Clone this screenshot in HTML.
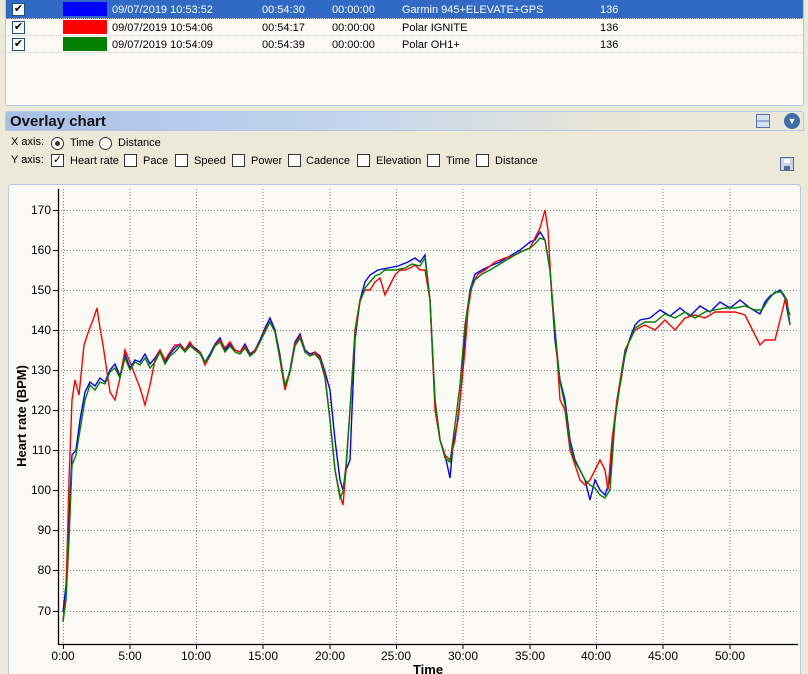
<!DOCTYPE html>
<html><head><meta charset="utf-8"><style>
*{margin:0;padding:0;box-sizing:border-box}
body{width:808px;height:674px;overflow:hidden;background:#ece9d8;font-family:"Liberation Sans",sans-serif;font-size:11px;color:#000;position:relative}
.abs{position:absolute}
.list{left:5px;top:0;width:799px;height:106px;background:#fbfaf5;border:1px solid #b7c8e3;border-top:none;border-radius:0 0 3px 3px}
.row{position:absolute;left:0;width:797px;height:17px;border-bottom:1px dotted #c8c8c8}
.row span{position:absolute;top:2px}
.cb{position:absolute;width:13px;height:13px;border:1px solid #1c5180;background:#fff;font-size:11px;line-height:11px;text-align:center}
.sw{position:absolute;left:57px;top:2px;width:44px;height:14px}
.hdr{left:5px;top:111px;width:799px;height:20px;border:1px solid #b7c8e3;border-radius:3px 3px 0 0;background:linear-gradient(90deg,#a8c0e8 0%,#c5d6ee 45%,#e8e6d8 75%,#ece9d8 100%)}
.hdr b{position:absolute;left:4px;top:1px;font-size:15px;color:#111}
.opt{position:absolute;font-size:11px}
.rb{position:absolute;width:13px;height:13px;border-radius:50%;border:1px solid #333;background:#fff}
.ck{position:absolute;width:13px;height:13px;border:1px solid #333;background:#fff;font-size:11px;line-height:11px;text-align:center}
</style></head><body>
<div class="abs list">
 <div class="row" style="top:0;background:#316ac5;color:#fff;height:19px">
  <div class="cb" style="left:6px;top:3px;color:#000">✔</div><div class="sw" style="background:#0000ff;top:2px"></div>
  <span style="left:106px;top:4px">09/07/2019 10:53:52</span><span style="left:256px;top:4px">00:54:30</span><span style="left:326px;top:4px">00:00:00</span><span style="left:396px;top:4px">Garmin 945+ELEVATE+GPS</span><span style="left:594px;top:4px">136</span>
 </div>
 <div class="row" style="top:19px">
  <div class="cb" style="left:6px;top:2px">✔</div><div class="sw" style="background:#ff0000;top:1px"></div>
  <span style="left:106px;top:3px">09/07/2019 10:54:06</span><span style="left:256px;top:3px">00:54:17</span><span style="left:326px;top:3px">00:00:00</span><span style="left:396px;top:3px">Polar IGNITE</span><span style="left:594px;top:3px">136</span>
 </div>
 <div class="row" style="top:36px">
  <div class="cb" style="left:6px;top:2px">✔</div><div class="sw" style="background:#008000;top:1px"></div>
  <span style="left:106px;top:3px">09/07/2019 10:54:09</span><span style="left:256px;top:3px">00:54:39</span><span style="left:326px;top:3px">00:00:00</span><span style="left:396px;top:3px">Polar OH1+</span><span style="left:594px;top:3px">136</span>
 </div>
</div>
<div class="abs hdr"><b>Overlay chart</b>
 <div class="abs" style="left:750px;top:2px;width:14px;height:14px;border:1px solid #5a6fc0;background:linear-gradient(#cfe4f8 0 45%,#5a6fc0 45% 55%,#cfe4f8 55%)"></div>
 <div class="abs" style="left:778px;top:1px;width:16px;height:16px;border-radius:50%;background:#3d6ea8;color:#fff;font-size:9px;text-align:center;line-height:16px">▼</div>
</div>
<div class="opt" style="left:11px;top:136px">X axis:</div>
<div class="rb" style="left:51px;top:137px"><div style="position:absolute;left:3px;top:3px;width:5px;height:5px;border-radius:50%;background:#333"></div></div>
<div class="opt" style="left:70px;top:137px">Time</div>
<div class="rb" style="left:99px;top:137px"></div>
<div class="opt" style="left:118px;top:137px">Distance</div>
<div class="opt" style="left:11px;top:154px">Y axis:</div>
<div class="ck" style="left:51px;top:154px">✓</div><div class="opt" style="left:70px;top:155px">Heart rate</div>
<div class="ck" style="left:124px;top:154px"></div><div class="opt" style="left:143px;top:155px">Pace</div>
<div class="ck" style="left:175px;top:154px"></div><div class="opt" style="left:194px;top:155px">Speed</div>
<div class="ck" style="left:232px;top:154px"></div><div class="opt" style="left:251px;top:155px">Power</div>
<div class="ck" style="left:288px;top:154px"></div><div class="opt" style="left:306px;top:155px">Cadence</div>
<div class="ck" style="left:357px;top:154px"></div><div class="opt" style="left:376px;top:155px">Elevation</div>
<div class="ck" style="left:427px;top:154px"></div><div class="opt" style="left:446px;top:155px">Time</div>
<div class="ck" style="left:476px;top:154px"></div><div class="opt" style="left:495px;top:155px">Distance</div>
<div class="abs" style="left:780px;top:157px;width:14px;height:14px;border:1px solid #5a6a90;background:#c8d4e8"><div style="position:absolute;left:3px;top:1px;width:6px;height:4px;background:#fff"></div><div style="position:absolute;left:3px;top:8px;width:6px;height:4px;background:#5a6a90"></div></div>
<svg class="abs" style="left:0;top:0" width="808" height="674">
<rect x="8.5" y="184.5" width="792" height="495" rx="3" fill="#fbfaf5" stroke="#b7c8e3"/>
<g stroke="#808080" stroke-dasharray="1,2" stroke-width="1">
<path d="M63.5 189V644M130 189V644M196.5 189V644M263 189V644M330 189V644M396.5 189V644M463 189V644M530 189V644M596.5 189V644M663 189V644M730 189V644"/>
<path d="M58 210.5H798M58 250.5H798M58 290.5H798M58 330.5H798M58 370.5H798M58 410.5H798M58 450.5H798M58 490.5H798M58 530.5H798M58 570.5H798M58 611.5H798"/>
</g>
<path d="M58.5 189V644.5H798" stroke="#000" fill="none" stroke-width="1.3"/>
<g stroke="#000"><path d="M53 210.5h5M53 250.5h5M53 290.5h5M53 330.5h5M53 370.5h5M53 410.5h5M53 450.5h5M53 490.5h5M53 530.5h5M53 570.5h5M53 611.5h5"/>
<path d="M63.5 644v5M130 644v5M196.5 644v5M263 644v5M330 644v5M396.5 644v5M463 644v5M530 644v5M596.5 644v5M663 644v5M730 644v5"/></g>
<g font-size="12" text-anchor="end" font-family="Liberation Sans">
<text x="51" y="214">170</text><text x="51" y="254">160</text><text x="51" y="294">150</text><text x="51" y="334">140</text><text x="51" y="374">130</text><text x="51" y="414">120</text><text x="51" y="454">110</text><text x="51" y="494">100</text><text x="51" y="534">90</text><text x="51" y="574">80</text><text x="51" y="615">70</text></g>
<g font-size="12" text-anchor="middle" font-family="Liberation Sans">
<text x="63" y="660">0:00</text><text x="130" y="660">5:00</text><text x="196" y="660">10:00</text><text x="263" y="660">15:00</text><text x="330" y="660">20:00</text><text x="396" y="660">25:00</text><text x="463" y="660">30:00</text><text x="530" y="660">35:00</text><text x="596" y="660">40:00</text><text x="663" y="660">45:00</text><text x="730" y="660">50:00</text>
<text x="428" y="674" font-weight="bold" font-size="13">Time</text></g>
<text transform="translate(26,416) rotate(-90)" text-anchor="middle" font-size="13" font-weight="bold" font-family="Liberation Sans">Heart rate (BPM)</text>
<g fill="none" stroke-width="1.4" stroke-linejoin="miter">
<polyline stroke="#0000ff" points="63,612 66,585 69,520 72,455 76,450 80,420 85,392 90,382 95,386 100,378 105,382 110,370 115,364 120,376 125,354 130,368 135,360 140,362 145,354 150,364 155,358 160,350 165,362 170,354 175,348 180,344 185,350 190,344 195,348 200,352 205,362 210,354 215,344 220,338 225,350 230,344 235,350 240,352 245,344 250,354 255,350 260,340 265,328 270,318 275,330 280,355 285,388 290,370 295,342 300,334 305,350 310,354 315,352 320,356 325,372 330,390 335,440 340,480 343,490 346,470 350,460 352,410 355,340 360,300 365,282 370,275 378,270 388,268 398,266 408,262 415,258 420,262 425,255 430,300 435,400 440,440 445,455 450,478 453,445 458,420 462,380 466,320 470,290 475,274 482,270 490,266 500,262 510,256 520,250 530,242 535,240 540,232 545,240 550,270 555,340 560,380 565,400 570,440 575,460 580,470 585,480 590,500 595,480 600,490 605,495 610,480 613,440 617,400 621,380 625,355 630,338 635,325 640,320 650,318 660,310 670,316 680,308 690,316 700,306 710,312 720,302 730,308 740,300 750,308 760,314 765,302 770,296 780,290 785,298 790,325"/>
<polyline stroke="#ff0000" points="63,620 66,595 69,480 72,400 75,380 79,395 84,345 89,330 93,320 97,308 100,328 103,345 107,372 110,392 115,400 120,378 125,350 130,362 135,375 140,388 145,405 150,385 155,360 160,350 165,360 170,352 175,345 180,345 185,350 190,342 195,350 200,352 205,365 210,356 215,345 220,340 225,348 230,342 235,350 240,352 245,346 250,356 255,350 260,342 265,330 270,322 275,332 280,360 285,390 290,372 295,344 300,336 305,352 310,356 315,352 320,358 325,375 330,420 335,470 340,495 343,505 346,470 350,410 355,330 360,300 365,290 370,290 375,282 380,278 385,295 390,285 395,275 400,270 405,270 410,268 415,265 420,270 425,270 430,300 435,410 440,440 445,455 450,460 455,440 460,400 465,350 468,310 472,285 478,274 485,270 495,262 505,258 515,255 525,250 530,248 535,238 540,228 545,210 548,230 552,300 556,340 560,400 565,410 570,450 575,465 580,480 585,485 590,480 595,470 600,460 605,470 608,490 612,440 617,400 621,375 625,350 630,340 635,330 645,325 655,330 665,320 675,330 685,318 695,315 705,318 715,312 725,312 735,312 745,315 755,335 760,345 765,340 775,340 780,320 785,300 790,315"/>
<polyline stroke="#008000" points="63,622 66,600 69,540 72,465 76,455 80,430 85,400 90,385 95,390 100,382 105,384 110,372 115,368 120,378 125,358 130,370 135,362 140,365 145,358 150,368 155,362 160,352 165,364 170,356 175,352 180,346 185,352 190,346 195,350 200,354 205,362 210,356 215,346 220,342 225,352 230,346 235,352 240,354 245,348 250,356 255,352 260,342 265,332 270,322 275,332 280,358 285,385 290,372 295,346 300,338 305,352 310,356 315,354 320,360 325,378 330,420 335,470 340,498 343,492 346,465 350,410 355,335 360,302 365,288 370,282 375,276 380,274 385,270 395,270 405,268 412,264 420,266 425,258 430,300 435,400 440,440 445,458 450,462 455,425 460,385 465,325 470,292 475,280 482,274 490,270 500,264 510,258 520,252 530,248 535,244 540,238 545,240 550,270 555,330 560,382 565,405 570,445 575,462 580,470 585,480 590,485 595,488 600,495 605,498 610,490 615,420 620,385 625,352 630,340 635,328 645,322 655,322 665,314 675,318 685,312 695,318 705,312 715,310 725,308 735,308 745,306 755,310 762,310 768,300 775,292 782,292 787,300 790,325"/>
</g>
</svg>
</body></html>
